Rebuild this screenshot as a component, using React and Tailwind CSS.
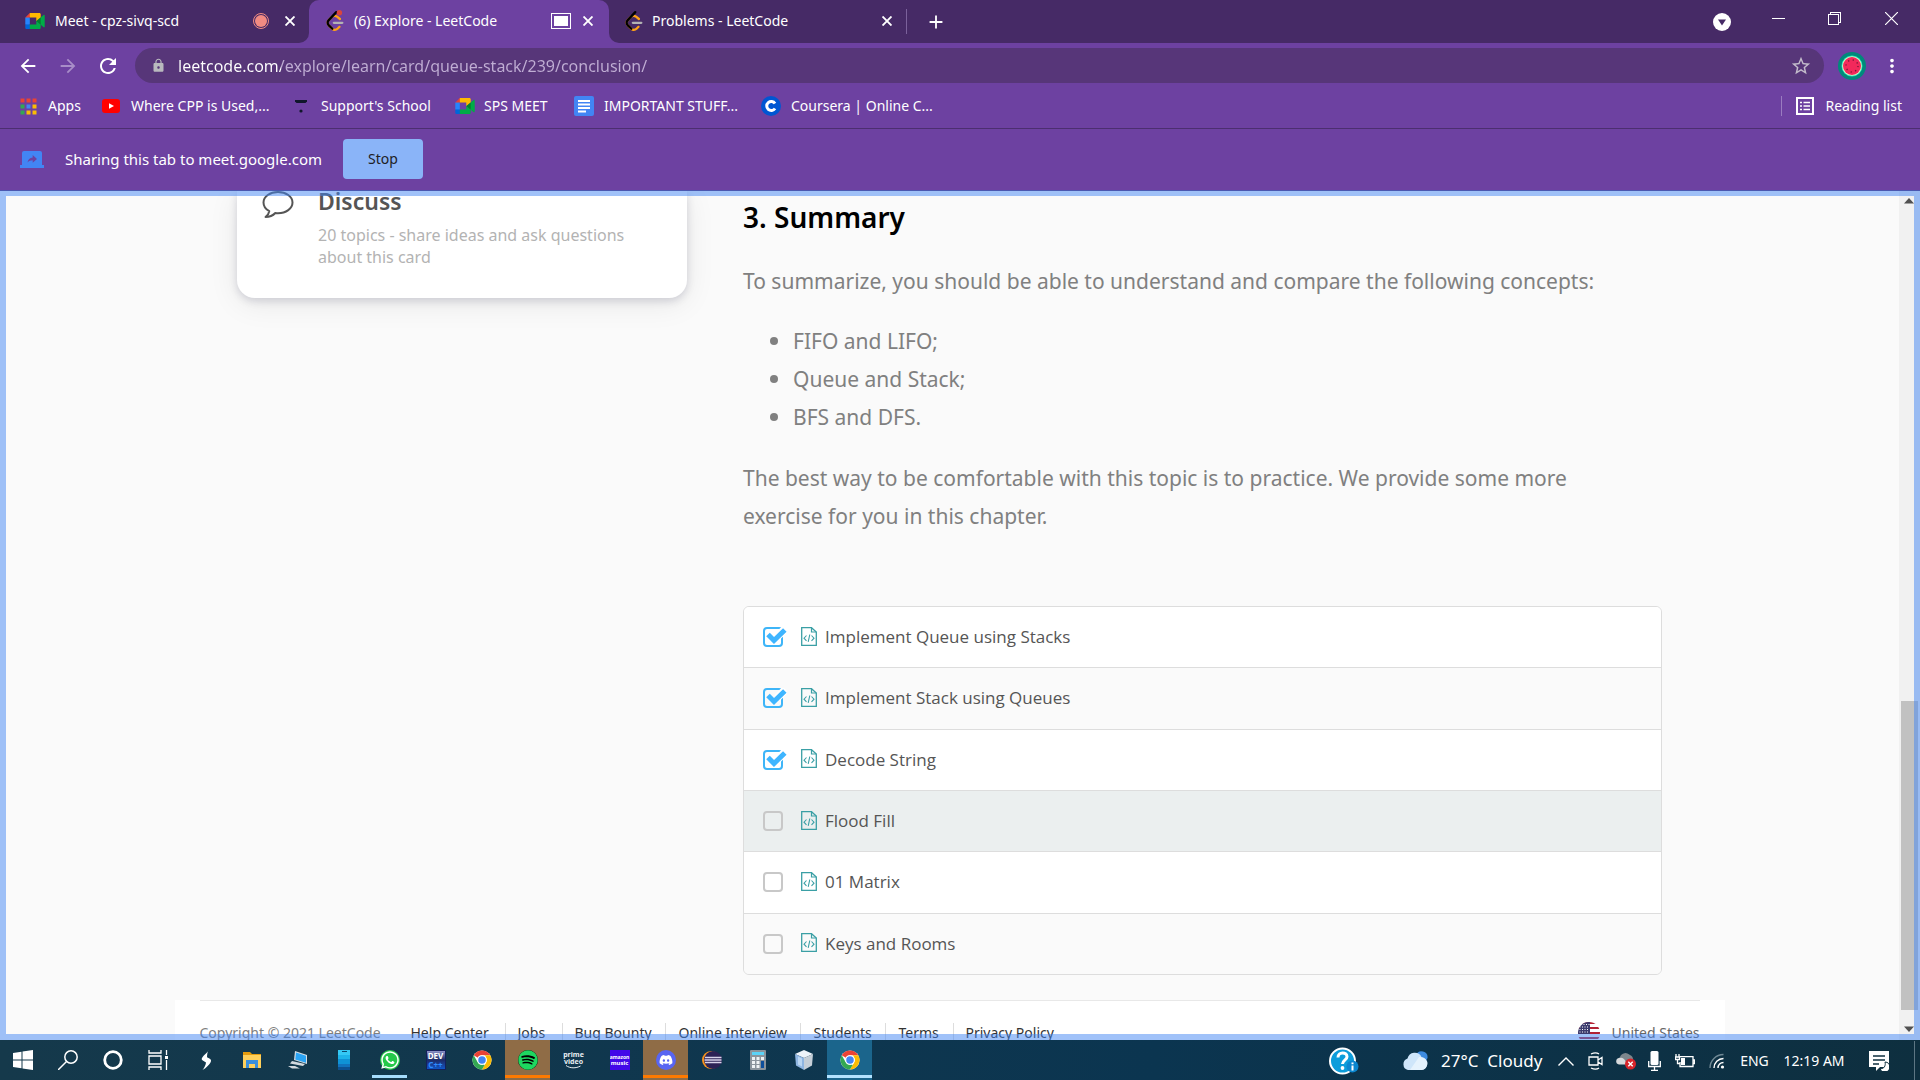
import React from "react";
import { FaWhatsapp, FaSpotify, FaDiscord } from "react-icons/fa";
import { MdArrowBack, MdArrowForward, MdRefresh, MdLock, MdStarBorder, MdAdd, MdMoreVert } from "react-icons/md";

/* ---------- logos and icons ---------- */

function MeetLogo() {
  return (
    <svg viewBox="0 0 87.5 72" className="h-4 w-5 shrink-0" aria-hidden="true">
      <path fill="#00832d" d="M49.5 36l8.53 9.75 11.47 7.33 2-17.02-2-16.64-11.69 6.44z" />
      <path fill="#0066da" d="M0 51.5V66c0 3.315 2.685 6 6 6h14.5l3-10.96-3-9.54-9.95-3z" />
      <path fill="#e94235" d="M20.5 0L0 20.5l10.55 3 9.95-3 2.95-9.41z" />
      <path fill="#2684fc" d="M20.5 20.5H0v31h20.5z" />
      <path fill="#00ac47" d="M82.6 8.68L69.5 19.42v33.66l13.16 10.79c1.97 1.54 4.85.135 4.85-2.37V11c0-2.535-2.945-3.925-4.91-2.32zM49.5 36v15.5h-29V72h43c3.315 0 6-2.685 6-6V53.08z" />
      <path fill="#ffba00" d="M63.5 0h-43v20.5h29V36l20-16.57V6c0-3.315-2.685-6-6-6z" />
    </svg>
  );
}

function LeetLogo({ badge }) {
  return (
    <svg viewBox="0 0 95 111" className="h-5 w-[18px] shrink-0 overflow-visible" aria-hidden="true">
      <path fill="#FFA116" d="M68 83.07c2.5-2.5 6.54-2.49 9.02.01 2.49 2.5 2.48 6.54-.01 9.03l-11.08 11.06c-10.21 10.2-26.87 10.35-37.26.34-.06-.06-4.68-4.59-19.94-19.55C-1.43 74-2.44 58.07 7.12 47.85l17.81-19.08c9.48-10.15 26.96-11.26 37.8-2.5l16.17 13.09c2.74 2.22 3.17 6.24.96 8.98-2.21 2.75-6.23 3.17-8.97.96L54.72 36.22c-5.67-4.59-15.59-3.96-20.48 1.28L16.43 56.57c-4.65 4.98-4.14 13 1.22 18.26L37.5 94.29c5.4 5.21 14.13 5.13 19.43-.17z" />
      <path fill="#B3B3B3" d="M41.1 72a6.38 6.38 0 0 1 0-12.77h47a6.38 6.38 0 0 1 0 12.77z" />
      <path fill="#000" d="M49.91 2.02a6.38 6.38 0 0 1 9.31 8.73L16.43 56.57c-4.65 4.98-4.14 13 1.22 18.26l19.76 19.38a6.38 6.38 0 0 1-8.92 9.13L8.73 83.96C-1.43 74-2.44 58.07 7.12 47.85z" />
      {badge && <circle cx="72" cy="10" r="15" fill="#d9453d" />}
    </svg>
  );
}

function ChromeLogo() {
  return (
    <svg viewBox="0 0 48 48" className="size-5" aria-hidden="true">
      <circle cx="24" cy="24" r="23" fill="#fff" />
      <path fill="#ea4335" d="M24 1a23 23 0 0 1 19.9 11.5H24A11.5 11.5 0 0 0 14 18.3L4.1 12.5A23 23 0 0 1 24 1z" />
      <path fill="#fbbc04" d="M43.9 12.5A23 23 0 0 1 24 47l10-17.2a11.5 11.5 0 0 0 0-11.5l-3.5-5.8z" />
      <path fill="#34a853" d="M24 47A23 23 0 0 1 4.1 12.5L14 29.8a11.5 11.5 0 0 0 13.5 5.1l3 1z" />
      <circle cx="24" cy="24" r="11.5" fill="#fff" />
      <circle cx="24" cy="24" r="9" fill="#4285f4" />
    </svg>
  );
}

function AppsIcon() {
  const colors = ["#ea4335", "#ea4335", "#ea4335", "#34a853", "#4285f4", "#fbbc04", "#34a853", "#fbbc04", "#fbbc04"];
  return (
    <svg viewBox="0 0 17 17" className="size-[17px] shrink-0" aria-hidden="true">
      {colors.map((c, i) => (
        <rect key={i} x={(i % 3) * 6 + 0.5} y={Math.floor(i / 3) * 6 + 0.5} width="4" height="4" fill={c} />
      ))}
    </svg>
  );
}

function YouTubeIcon() {
  return (
    <svg viewBox="0 0 18 14" className="h-3.5 w-[18px] shrink-0" aria-hidden="true">
      <rect width="18" height="14" rx="3" fill="#f00" />
      <path d="M7 4.2v5.6L12 7z" fill="#fff" />
    </svg>
  );
}

function SchoolIcon() {
  return (
    <svg viewBox="0 0 16 16" className="size-4 shrink-0" aria-hidden="true">
      <path d="M2 2h12v1.500l-1.500 1.500h-9L2 3.500z" fill="#10162b" />
      <circle cx="8" cy="13" r="1.600" fill="#10162b" />
    </svg>
  );
}

function DocsIcon() {
  return (
    <svg viewBox="0 0 20 20" className="size-5 shrink-0" aria-hidden="true">
      <rect width="20" height="20" rx="2" fill="#4285f4" />
      <path d="M4 5h12M4 8.500h12M4 12h12M4 15.500h8" stroke="#fff" strokeWidth="1.800" />
    </svg>
  );
}

function CourseraIcon() {
  return (
    <svg viewBox="0 0 20 20" className="size-5 shrink-0" aria-hidden="true">
      <circle cx="10" cy="10" r="10" fill="#0056d2" />
      <path d="M14 7.500A4.500 4.500 0 1 0 14 12.500" stroke="#fff" strokeWidth="3" fill="none" />
    </svg>
  );
}

function ReadingListIcon() {
  return (
    <svg viewBox="0 0 18 18" className="size-[18px] shrink-0" fill="none" stroke="#fff" aria-hidden="true">
      <rect x="1" y="1" width="16" height="16" strokeWidth="2" />
      <path d="M4 5.500h2M4 9h2M4 12.500h2M7.500 5.500H14M7.500 9H14M7.500 12.500H14" strokeWidth="1.500" />
    </svg>
  );
}

function ShareTabIcon() {
  return (
    <svg viewBox="0 0 24 17" className="h-[17px] w-6 shrink-0" aria-hidden="true">
      <path d="M4 0h16a2 2 0 0 1 2 2v12h2v3H0v-3h2V2a2 2 0 0 1 2-2z" fill="#4285f4" />
      <path d="M7.500 11.500c.5-3 2.300-4.800 5.200-5.100V4l4.300 3.900-4.300 3.800V9.300c-2.300 0-4 .7-5.200 2.200z" fill="#6d41a1" />
    </svg>
  );
}

function MelonAvatar() {
  return (
    <svg viewBox="0 0 28 28" className="size-7" aria-hidden="true">
      <circle cx="14" cy="14" r="14" fill="#00897b" />
      <circle cx="14" cy="14" r="10.500" fill="#1de9b6" />
      <circle cx="14" cy="14" r="9.800" fill="#e0f2c8" />
      <circle cx="14" cy="14" r="9" fill="#f2295b" />
      <circle cx="14" cy="14" r="6" fill="none" stroke="#7a1836" strokeWidth="1.400" strokeDasharray="1.200 3.510" />
    </svg>
  );
}

function ChatIcon() {
  return (
    <svg viewBox="0 0 32 28" className="h-7 w-8 shrink-0" fill="none" stroke="#555" strokeWidth="2" strokeLinejoin="round" aria-hidden="true">
      <path d="M16 1C8 1 1.500 5.500 1.500 11.500c0 3.700 2.300 6.800 5.800 8.700C7 22.500 5.500 24.500 3.500 26c4 0 7.500-1.500 9.800-4 .9.100 1.800.200 2.700.200 8 0 14.500-4.700 14.500-10.700S24 1 16 1z" />
    </svg>
  );
}

function CodeFileIcon() {
  return (
    <svg viewBox="0 0 16 19" className="h-[19px] w-4 shrink-0" fill="none" stroke="#3a9fa5" aria-hidden="true">
      <path d="M.7.700h9.800L15.300 5v13.300H.7z" strokeWidth="1.300" />
      <path d="M10.500.700V5h4.800" strokeWidth="1.200" />
      <path d="M5.500 8.500L3 11.200l2.500 2.700M10.500 8.500l2.500 2.700-2.500 2.700M8.800 7.500l-1.600 7.300" strokeWidth="1.100" />
    </svg>
  );
}

function UsFlag() {
  return (
    <svg viewBox="0 0 22 22" className="size-[22px]" aria-hidden="true">
      <clipPath id="flag-disc"><circle cx="11" cy="11" r="11" /></clipPath>
      <g clipPath="url(#flag-disc)">
        <rect width="22" height="22" fill="#fff" />
        <path d="M0 1h22M0 6h22M0 11h22M0 16h22M0 20h22" stroke="#b22234" strokeWidth="2.200" />
        <rect width="12" height="12" fill="#3c3b6e" />
        <path d="M3 2.500h9M1.500 5h10M1.500 7.500h10M1.500 10h10" stroke="#fff" strokeWidth="1" strokeDasharray="1 1.500" />
      </g>
    </svg>
  );
}

/* ---------- browser chrome ---------- */

function IconButton({ label, className = "", children }) {
  return (
    <button type="button" aria-label={label} className={`flex shrink-0 items-center justify-center ${className}`}>
      {children}
    </button>
  );
}

function CloseTab() {
  return (
    <IconButton label="Close tab" className="w-5">
      <svg viewBox="0 0 10 10" className="size-2.5" stroke="#fff" strokeWidth="1.900"><path d="M.5.500l9 9M9.500.500l-9 9" /></svg>
    </IconButton>
  );
}

function TabStrip() {
  return (
    <div className="flex h-[43px] bg-[#6d41a1] text-sm text-white">
      <div className="flex w-[309px] items-center rounded-br-[10px] bg-[#462a66] pr-[9px] pb-0.5 pl-[25px]">
        <MeetLogo />
        <button type="button" className="ml-2.5 flex-1 text-left whitespace-nowrap">Meet - cpz-sivq-scd</button>
        <span className="mr-[11px] flex size-4 items-center justify-center rounded-full border border-[#f28b82]">
          <span className="size-3 rounded-full bg-[#f28b82]" />
        </span>
        <CloseTab />
      </div>
      <div className="flex w-[300px] bg-linear-to-b from-[#462a66] from-50% to-[#6d41a1] to-50%">
        <div className="flex flex-1 items-center rounded-t-[10px] bg-[#6d41a1] pr-[11px] pb-0.5 pl-[17px]">
          <LeetLogo badge />
          <button type="button" className="ml-2.5 flex-1 text-left whitespace-nowrap">(6) Explore - LeetCode</button>
          <span className="mr-[7px] h-4 w-5 border border-white p-0.5"><span className="block h-full bg-white" /></span>
          <CloseTab />
        </div>
      </div>
      <div className="flex flex-1 rounded-bl-[10px] bg-[#462a66]">
        <div className="flex w-[297px] items-center pr-[9px] pb-0.5 pl-4">
          <LeetLogo />
          <button type="button" className="ml-[9px] flex-1 text-left whitespace-nowrap">Problems - LeetCode</button>
          <CloseTab />
        </div>
        <div className="h-[25px] w-px self-center bg-[#7b619b]" />
        <IconButton label="New tab" className="w-[57px]"><MdAdd className="size-[22px]" /></IconButton>
        <div className="ml-auto flex">
          <IconButton label="Search tabs" className="w-14">
            <svg viewBox="0 0 18 18" className="size-[18px]"><circle cx="9" cy="9" r="9" fill="#fff" /><path d="M5 6.500h8L9 12.500z" fill="#462a66" /></svg>
          </IconButton>
          <IconButton label="Minimize" className="h-9 w-14">
            <svg viewBox="0 0 13 13" className="size-[13px]" stroke="#fff" shapeRendering="crispEdges"><path d="M0 6.500h13" /></svg>
          </IconButton>
          <IconButton label="Restore" className="h-9 w-14">
            <svg viewBox="0 0 13 13" className="size-[13px]" fill="none" stroke="#fff" shapeRendering="crispEdges"><path d="M.5 2.500h10v10H.5zM2.500 2.500v-2h10v10h-2" /></svg>
          </IconButton>
          <IconButton label="Close" className="h-9 w-[58px]">
            <svg viewBox="0 0 13 13" className="size-[13px]" stroke="#fff" strokeWidth="1.200"><path d="M0 0l13 13M13 0L0 13" /></svg>
          </IconButton>
        </div>
      </div>
    </div>
  );
}

function AddressBar() {
  return (
    <div className="flex h-[45px] items-center bg-[#6d41a1] text-white">
      <div className="flex pl-2">
        <IconButton label="Back" className="w-10"><MdArrowBack className="size-[22px]" /></IconButton>
        <IconButton label="Forward" className="w-10 text-[#a88dc8]"><MdArrowForward className="size-[22px]" /></IconButton>
        <IconButton label="Reload" className="w-10"><MdRefresh className="size-6" /></IconButton>
      </div>
      <div className="ml-[7px] flex h-[35px] flex-1 items-center rounded-full bg-[#573679] pr-3 pl-4">
        <MdLock className="size-[15px] text-[#b9b9be]" aria-hidden="true" />
        <input
          type="text"
          aria-label="Address"
          defaultValue="leetcode.com/explore/learn/card/queue-stack/239/conclusion/"
          className="ml-3 flex-1 bg-linear-to-r from-white from-[103px] to-[#c0aed4] to-[103px] bg-clip-text text-base text-transparent outline-none"
        />
        <IconButton label="Bookmark this tab"><MdStarBorder className="size-[22px] text-[#c3bccb]" /></IconButton>
      </div>
      <IconButton label="Profile" className="ml-3.5 w-7"><MelonAvatar /></IconButton>
      <IconButton label="Menu" className="mr-4 ml-3.5 w-6"><MdMoreVert className="size-[22px]" /></IconButton>
    </div>
  );
}

const bookmarks = [
  { label: "Apps", icon: <AppsIcon />, box: "w-[82px] gap-[11px]" },
  { label: "Where CPP is Used,...", icon: <YouTubeIcon />, box: "w-[191px] gap-[11px]" },
  { label: "Support's School", icon: <SchoolIcon />, box: "w-[162px] gap-3" },
  { label: "SPS MEET", icon: <MeetLogo />, box: "w-[119px] gap-[9px]" },
  { label: "IMPORTANT STUFF...", icon: <DocsIcon />, box: "w-[187px] gap-[10px]" },
  { label: "Coursera | Online C...", icon: <CourseraIcon />, box: "w-[187px] gap-[10px]" },
];

function BookmarksBar() {
  return (
    <nav className="flex h-[41px] items-center border-b border-[#4c2e70] bg-[#6d41a1] pb-1 pl-5 text-sm text-white">
      {bookmarks.map((b) => (
        <a key={b.label} href="#" className={`flex items-center whitespace-nowrap ${b.box}`}>
          {b.icon}
          {b.label}
        </a>
      ))}
      <button type="button" className="mr-[18px] ml-auto flex h-5 items-center gap-[11px] border-l border-[#9a7cc0] pl-3.5 whitespace-nowrap">
        <ReadingListIcon />
        Reading list
      </button>
    </nav>
  );
}

function SharingBar() {
  return (
    <div className="flex h-[62px] items-center border-b border-[#4b57b0] bg-[#6d41a1] pb-px pl-5 text-white">
      <ShareTabIcon />
      <span className="ml-[21px] w-[278px] text-[15px] whitespace-nowrap">Sharing this tab to meet.google.com</span>
      <button type="button" className="h-10 w-20 rounded-[4px] bg-[#8ab4f8] text-sm text-[#202124]">Stop</button>
    </div>
  );
}

/* ---------- page ---------- */

const problems = [
  { title: "Implement Queue using Stacks", done: true, row: "bg-white" },
  { title: "Implement Stack using Queues", done: true, row: "bg-[#fafafa]" },
  { title: "Decode String", done: true, row: "bg-white" },
  { title: "Flood Fill", done: false, row: "bg-[#ebefef]" },
  { title: "01 Matrix", done: false, row: "bg-white" },
  { title: "Keys and Rooms", done: false, row: "bg-[#fafafa]" },
];

function ProblemRow({ title, done, row }) {
  return (
    <li className={`flex flex-1 items-center border-b border-[#ddd] pl-[19px] last:border-b-0 ${row}`}>
      <label className="flex items-center font-['Open_Sans','Noto_Sans',sans-serif] text-[17px] font-medium text-[#555]">
        <span className="relative flex">
          <input
            type="checkbox"
            defaultChecked={done}
            className="size-5 appearance-none rounded-[4px] border-2 border-[#c8c8c8] checked:border-[#3eb5f8]"
          />
          {done && (
            <svg viewBox="0 0 24 20" className="pointer-events-none absolute top-0 left-0 h-5 w-6" fill="none" aria-hidden="true">
              <path d="M14 10L22.500 1.500" stroke="#fff" strokeWidth="8" />
              <path d="M5 7.500l6 6L21.800 3" stroke="#3eb5ff" strokeWidth="5" />
            </svg>
          )}
        </span>
        <span className="mr-2 ml-[18px] pb-0.5"><CodeFileIcon /></span>
        {title}
      </label>
    </li>
  );
}

function Article() {
  return (
    <main className="w-[919px] text-[21px] leading-[38px] text-[#808080]">
      <h2 className="pt-[7px] text-[28px] font-semibold text-black">3. Summary</h2>
      <p className="mt-[26px] pr-10">To summarize, you should be able to understand and compare the following concepts:</p>
      <ul className="mt-[21px] list-disc pl-[50px] marker:font-['Open_Sans'] marker:text-[22px]">
        <li className="h-[38px]">FIFO and LIFO;</li>
        <li className="h-[38px]">Queue and Stack;</li>
        <li className="h-[38px]">BFS and DFS.</li>
      </ul>
      <p className="mt-6 pr-10">
        The best way to be comfortable with this topic is to practice. We provide some more exercise for you in this chapter.
      </p>
      <ul className="mt-[71px] flex h-[369px] flex-col overflow-hidden rounded-md border border-[#ddd] leading-6">
        {problems.map((p) => <ProblemRow key={p.title} {...p} />)}
      </ul>
    </main>
  );
}

function DiscussCard() {
  return (
    <aside className="flex h-[107px] w-[450px] rounded-b-[18px] bg-white pl-[25px] shadow-[0_6px_30px_rgba(0,0,0,0.08),0_3px_8px_rgba(0,10,60,0.14)]">
      <ChatIcon />
      <div className="-mt-1.5 ml-6 w-[340px]">
        <h3 className="text-[23px] leading-8 font-semibold text-[#555]">Discuss</h3>
        <p className="mt-[7px] text-base leading-[22px] text-[#b3b3b3]">20 topics - share ideas and ask questions about this card</p>
      </div>
    </aside>
  );
}

const footerLinks = [
  ["Help Center", "w-[94px] border-l-0"],
  ["Jobs", "w-[57px] pl-3"],
  ["Bug Bounty", "w-[103px] pl-3"],
  ["Online Interview", "w-[135px] pl-[13px]"],
  ["Students", "w-[85px] pl-[13px]"],
  ["Terms", "w-[68px] pl-[13px]"],
  ["Privacy Policy", "pl-3"],
];

function Footer() {
  return (
    <footer className="mx-auto mt-[25px] w-full max-w-[1550px] bg-white px-[25px] text-sm">
      <div className="flex h-16 items-center border-t border-[#e8e8e8] whitespace-nowrap text-[#333]">
        <span className="w-[211px] text-[#808080]">Copyright © 2021 LeetCode</span>
        {footerLinks.map(([name, box]) => (
          <a key={name} href="#" className={`border-l border-[#ddd] leading-5 ${box}`}>{name}</a>
        ))}
        <button type="button" className="ml-auto flex items-center gap-3 text-[#666]">
          <UsFlag />
          United States
        </button>
      </div>
    </footer>
  );
}

function Scrollbar() {
  return (
    <div className="flex w-[21px] shrink-0 flex-col bg-[#f1f1f1] pr-0.5">
      <button type="button" aria-label="Scroll up" className="flex h-[15px] items-end justify-center">
        <svg viewBox="0 0 10 6" className="mb-0.5 h-1.5 w-2.5"><path d="M0 5.500L5 0l5 5.500z" fill="#505050" /></svg>
      </button>
      <div className="flex flex-1 flex-col pl-0.5">
        <div className="mt-auto mb-2.5 h-[38%] bg-[#c1c1c1]" />
      </div>
      <button type="button" aria-label="Scroll down" className="flex h-5 items-start justify-center pt-1.5">
        <svg viewBox="0 0 10 6" className="h-1.5 w-2.5"><path d="M0 .5L5 6l5-5.500z" fill="#505050" /></svg>
      </button>
    </div>
  );
}

/* ---------- taskbar ---------- */

function StartIcon() {
  return (
    <svg viewBox="0 0 20 20" className="size-5" fill="#fff"><path d="M0 3l8.500-1.200v7.700H0zM9.500 1.600L20 0v9.500H9.500zM0 10.500h8.500v7.700L0 17zM9.500 10.500H20V20L9.500 18.400z" /></svg>
  );
}
function SearchIcon() {
  return (
    <svg viewBox="0 0 20 20" className="size-5" fill="none" stroke="#fff" strokeWidth="1.500"><circle cx="13" cy="7" r="6.200" /><path d="M8.500 11.500L0 20" /></svg>
  );
}
function CortanaIcon() {
  return <svg viewBox="0 0 20 20" className="size-5" fill="none"><circle cx="10" cy="10" r="8.300" stroke="#fff" strokeWidth="2.800" /></svg>;
}
function TaskViewIcon() {
  return (
    <svg viewBox="0 0 20 20" className="size-5" fill="none" stroke="#fff" strokeWidth="1.300">
      <path d="M1 0v3h12V0M1 20v-3h12v3M1 6h12v8H1zM18.500 0v5M18.500 10v10" />
      <path d="M17 6h3v3h-3z" fill="#fff" stroke="none" />
    </svg>
  );
}
function BoltIcon() {
  return <svg viewBox="0 0 12 20" className="h-5 w-3" fill="#fff"><path d="M8.500 0C8.500 2 4 4.500 2 8c-.6 1.200-.2 2 .8 2.600L6 12.500c-.3 2.500-1.500 5-3.500 7.500 3-1.500 8-6 8.500-9 .2-1.200-.6-2-1.600-2.500L7 7.300C7 4.500 7.500 2 8.500 0z" /></svg>;
}
function ExplorerIcon() {
  return (
    <svg viewBox="0 0 18 16" className="h-4 w-[18px]">
      <path d="M0 0h7l2 2h9v3H0z" fill="#e59c0e" /><path d="M0 3h18v13H0z" fill="#ffd05b" />
      <path d="M3 8h12v8h-3v-4H6v4H3z" fill="#3a8fdc" />
    </svg>
  );
}
function RemoteIcon() {
  return (
    <svg viewBox="0 0 20 18" className="h-[18px] w-5">
      <path d="M7 0l12 4v9L6 9z" fill="#d6dde2" /><path d="M8 1.500l10 3.300v7L7.300 8.500z" fill="#2aa4f4" />
      <path d="M4 10l13 3-2 2-13-2.500zM0 15l7 0 5 2.500H4z" fill="#d3d9de" />
    </svg>
  );
}
function PhoneIcon() {
  return (
    <svg viewBox="0 0 12 20" className="h-5 w-3">
      <rect width="12" height="20" fill="#35c9f5" /><path d="M0 5h12v5H0z" fill="#1db4ea" /><path d="M0 9h12v5H0z" fill="#0f93d6" />
      <path d="M0 14h12v3H0z" fill="#1173bd" /><path d="M0 17h12v3H0z" fill="#0c5191" /><path d="M4 1.500h5" stroke="#08486e" />
    </svg>
  );
}
function WhatsAppTile() {
  return (
    <span className="flex size-5 items-center justify-center rounded-full bg-[#25c94a] text-white"><FaWhatsapp className="size-5" /></span>
  );
}
function DevCppIcon() {
  return (
    <span className="flex size-5 flex-col items-center justify-center overflow-hidden border border-[#13205a] bg-linear-to-b from-[#8f94c8] via-[#1b2a66] to-[#0b56c8] text-[8px] leading-[9px] font-bold text-white">
      <span>DEV</span><span className="text-[#2f8bff]">C++</span>
    </span>
  );
}
function PrimeIcon() {
  return (
    <span className="flex flex-col items-center text-[7px] leading-[7px] font-bold text-[#e8eef2]">
      <span>prime</span><span>video</span>
      <svg viewBox="0 0 16 4" className="h-1 w-4" fill="none" stroke="#e8eef2"><path d="M0 .5c4 3 10 3 14.500.5" /></svg>
    </span>
  );
}
function AmazonMusicIcon() {
  return (
    <span className="flex size-5 flex-col items-center justify-center overflow-hidden bg-[#4208e8] text-[5px] leading-[6px] font-bold text-white">
      <span>amazon</span><span className="text-[6px]">music</span>
    </span>
  );
}
function DiscordTile() {
  return <span className="flex size-5 items-center justify-center rounded-full bg-[#5865f2] text-white"><FaDiscord className="size-3.5" /></span>;
}
function EclipseIcon() {
  return (
    <svg viewBox="0 0 20 20" className="size-5">
      <circle cx="9" cy="10" r="9" fill="#f7941e" /><circle cx="11" cy="10" r="9" fill="#2c2255" />
      <path d="M3 7.500h16.500M2.500 10h17M3 12.500h16.500" stroke="#d8d4ea" strokeWidth="1.500" />
    </svg>
  );
}
function CalculatorIcon() {
  return (
    <svg viewBox="0 0 16 20" className="h-5 w-4">
      <rect width="16" height="20" rx="1" fill="#8a949c" /><path d="M2 2h12v3H2z" fill="#5bd3f7" />
      <path d="M2 7h3v3H2zM6.500 7h3v3h-3zM11 7h3v3h-3zM2 11h3v3H2zM6.500 11h3v3h-3zM2 15h3v3H2zM6.500 15h3v3h-3z" fill="#eef2f4" />
      <path d="M11 11h3v7h-3z" fill="#0d4f9c" />
    </svg>
  );
}
function CubeIcon() {
  return (
    <svg viewBox="0 0 18 20" className="h-5 w-[18px]">
      <path d="M9 0l9 4-9 4-9-4z" fill="#eef4fa" /><path d="M0 4l9 4v12l-8-4.500z" fill="#8fb6e2" /><path d="M18 4L9 8v12l8-4.500z" fill="#c5cfd8" />
      <path d="M3 6.500l4 2v8l-4-2z" fill="#d9ecff" opacity=".6" />
    </svg>
  );
}

const systemButtons = [
  ["Start", <StartIcon />],
  ["Search", <SearchIcon />],
  ["Cortana", <CortanaIcon />],
  ["Task View", <TaskViewIcon />],
];

const apps = [
  ["Launcher", <BoltIcon />, ""],
  ["File Explorer", <ExplorerIcon />, ""],
  ["Remote Desktop", <RemoteIcon />, ""],
  ["Your Phone", <PhoneIcon />, ""],
  ["WhatsApp", <WhatsAppTile />, "after:absolute after:inset-x-[5px] after:bottom-0.5 after:h-[3px] after:bg-[#a5dcfc]"],
  ["Dev-C++", <DevCppIcon />, ""],
  ["Chrome", <ChromeLogo />, ""],
  ["Spotify", <span className="rounded-full bg-black"><FaSpotify className="size-5 text-[#1ed760]" /></span>, "bg-[#8f6c46] after:absolute after:inset-x-0 after:bottom-0.5 after:h-[3px] after:bg-[#ff7a00]"],
  ["Prime Video", <PrimeIcon />, ""],
  ["Amazon Music", <AmazonMusicIcon />, ""],
  ["Discord", <DiscordTile />, "bg-[#8f6c46] after:absolute after:inset-x-0 after:bottom-0.5 after:h-[3px] after:bg-[#ff7a00]"],
  ["Eclipse", <EclipseIcon />, ""],
  ["Calculator", <CalculatorIcon />, ""],
  ["VirtualBox", <CubeIcon />, ""],
  ["Chrome window", <ChromeLogo />, "bg-[#1b658c] after:absolute after:inset-x-0 after:bottom-0.5 after:h-[3px] after:bg-[#b3e2ff]"],
];

function HelpIcon() {
  return (
    <svg viewBox="0 0 30 28" className="h-7 w-[30px]">
      <circle cx="13.500" cy="14" r="12.500" fill="#0d9ddb" stroke="#fff" strokeWidth="2" />
      <path d="M9 10.500c0-6 9-6 9-.8 0 3.500-4.500 3.500-4.500 7.300" fill="none" stroke="#fff" strokeWidth="3" />
      <circle cx="13.500" cy="21" r="1.900" fill="#fff" /><circle cx="23.500" cy="19.500" r="6" fill="#0b86cf" />
      <path d="M23.500 18.500v5M23.500 15.500v1.700" stroke="#fff" strokeWidth="2" />
    </svg>
  );
}
function CloudIcon() {
  return (
    <svg viewBox="0 0 26 20" className="h-5 w-[26px] shrink-0">
      <path d="M14 4a6 6 0 0 1 11.500 3l-2 4z" fill="#3d8be0" />
      <path d="M6 19a6 6 0 0 1-.5-11.500A7.500 7.500 0 0 1 19.500 6 6.600 6.600 0 0 1 19.500 19z" fill="#cfe6fa" />
      <path d="M8 19l9-13c3 0 8 2 8.500 6-.3 4-2.500 7-6 7z" fill="#e6f3fd" />
    </svg>
  );
}
function MeetNowIcon() {
  return (
    <svg viewBox="0 0 15 18" className="h-[18px] w-[15px]" fill="none" stroke="#fff" strokeWidth="1.300">
      <path d="M1 5h9v8H1zM10 8l4-2.500v7L10 10M3 2c3-1.500 6-1.500 8 0M3 16c3 1.500 6 1.500 8 0" />
    </svg>
  );
}
function OneDriveIcon() {
  return (
    <svg viewBox="0 0 20 18" className="h-[18px] w-5">
      <path d="M4 12a4 4 0 0 1 0-7 6 6 0 0 1 10-2 5 5 0 0 1 3 5v4z" fill="#7d878d" /><path d="M3 12.500a3.200 3.200 0 0 1 1-6.500c3-1 5 1 7 6.500z" fill="#d7dadc" />
      <circle cx="14.500" cy="12" r="5.500" fill="#d9252b" /><path d="M12.300 9.800l4.400 4.400M16.700 9.800l-4.400 4.400" stroke="#fff" strokeWidth="1.400" />
    </svg>
  );
}
function MicIcon() {
  return (
    <svg viewBox="0 0 13 20" className="h-5 w-[13px]"><rect x="2.500" width="8" height="14" rx="1.500" fill="#fff" /><path d="M.7 10v5.500h11.600V10M6.500 15.500V19M3 19.300h7" fill="none" stroke="#fff" strokeWidth="1.300" /></svg>
  );
}
function BatteryIcon() {
  return (
    <svg viewBox="0 0 20 14" className="h-3.5 w-5" fill="none" stroke="#fff" strokeWidth="1.300">
      <path d="M5 2.700h13V12.500H5V8M18 6h1.400v3.500H18M1 0v2.500M4 0v2.500M.5 3h4v2.500h-4zM2.500 5.500v4H5" /><path d="M6 4h4v7H6z" fill="#fff" stroke="none" />
    </svg>
  );
}
function WifiIcon() {
  return (
    <svg viewBox="0 0 16 16" className="size-4" fill="none" stroke="#fff" strokeWidth="1.400">
      <path d="M5 15A9.500 9.500 0 0 1 14.500 5.500M9 15a5.500 5.500 0 0 1 5.500-5.500" /><path d="M1 15A13.500 13.500 0 0 1 14.500 1.500" stroke="#6f8894" /><circle cx="13.500" cy="14" r="1.600" fill="#fff" stroke="none" />
    </svg>
  );
}
function NotificationIcon() {
  return (
    <svg viewBox="0 0 20 20" className="size-5">
      <path d="M0 0h20v16h-9l-4 4v-4H0z" fill="#fff" /><path d="M4 5h12M4 9h12M4 13h6" stroke="#0f3040" strokeWidth="1.300" />
      <path d="M16 11a5 5 0 1 1-5 6.500c4 1 6-3 5-6.500z" fill="#fff" stroke="#0f3040" />
    </svg>
  );
}

function Taskbar() {
  return (
    <footer className="flex h-10 shrink-0 bg-linear-to-r from-[#15394b] via-[#0b3550] via-60% to-[#0e2f3f] text-white">
      <div className="flex">
        {systemButtons.map(([name, icon]) => (
          <IconButton key={name} label={name} className="w-[45px]">{icon}</IconButton>
        ))}
      </div>
      <div className="ml-[3px] flex gap-px">
        {apps.map(([name, icon, state]) => (
          <IconButton key={name} label={name} className={`relative w-[45px] pb-px ${state}`}>{icon}</IconButton>
        ))}
      </div>
      <div className="ml-auto flex items-center pt-0.5">
        <IconButton label="Get help" className="mr-[43px]"><HelpIcon /></IconButton>
        <button type="button" className="flex w-[149px] items-center gap-[13px] text-[17px] whitespace-pre">
          <CloudIcon />
          {"27°C  Cloudy"}
        </button>
        <IconButton label="Show hidden icons" className="w-[29px]">
          <svg viewBox="0 0 16 9" className="h-[9px] w-4" fill="none" stroke="#fff" strokeWidth="1.400"><path d="M.5 8.500L8 1l7.500 7.500" /></svg>
        </IconButton>
        <IconButton label="Meet Now" className="w-[31px]"><MeetNowIcon /></IconButton>
        <IconButton label="OneDrive" className="w-[29px]"><OneDriveIcon /></IconButton>
        <IconButton label="Microphone" className="w-[29px]"><MicIcon /></IconButton>
        <IconButton label="Battery" className="w-[31px]"><BatteryIcon /></IconButton>
        <IconButton label="Network" className="w-[33px]"><WifiIcon /></IconButton>
        <button type="button" className="w-[43px] text-sm">ENG</button>
        <button type="button" className="w-[76px] text-sm whitespace-nowrap">12:19 AM</button>
        <IconButton label="Notifications" className="ml-[5px] w-11"><NotificationIcon /></IconButton>
        <span className="ml-[13px] h-10 w-1.5 border-l border-[#5d7683]" />
      </div>
    </footer>
  );
}

export default function App() {
  return (
    <div className="flex h-screen flex-col overflow-hidden font-['Noto_Sans','Open_Sans',sans-serif]">
      <header>
        <TabStrip />
        <AddressBar />
        <BookmarksBar />
        <SharingBar />
      </header>
      <div className="relative flex min-h-0 flex-1 overflow-hidden">
        <div className="min-w-0 flex-1 overflow-hidden bg-[#fafafa]">
          <div className="flex justify-center gap-14">
            <DiscussCard />
            <Article />
          </div>
          <Footer />
        </div>
        <Scrollbar />
        <div className="pointer-events-none absolute inset-0 border-6 border-t-[5px] border-[#4285f4]/50" />
      </div>
      <Taskbar />
    </div>
  );
}
